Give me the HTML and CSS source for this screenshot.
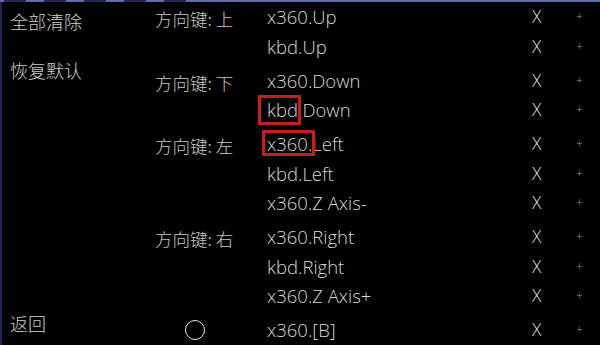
FILE: index.html
```html
<!DOCTYPE html>
<html lang="zh-CN">
<head>
  <meta charset="UTF-8" />
  <title>按键设置</title>
  <link rel="stylesheet" href="styles.css">
</head>
<body>
  <div class="top-bar">
    <span class="tab"></span><span class="tab"></span><span class="tab"></span><span class="tab"></span><span class="tab"></span>
  </div>
  <div class="main">
    <div class="side">
      <div class="side-btn">全部清除</div>
      <div class="side-btn">恢复默认</div>
      <div class="side-btn back">返回</div>
    </div>
    <div class="list">
      <div class="group">
        <div class="label">方向键: 上</div>
        <div class="rows">
          <div class="row"><span class="val">x360.Up</span><span class="del">X</span><span class="add">+</span></div>
          <div class="row"><span class="val">kbd.Up</span><span class="del">X</span><span class="add">+</span></div>
        </div>
      </div>
      <div class="group">
        <div class="label">方向键: 下</div>
        <div class="rows">
          <div class="row"><span class="val">x360.Down</span><span class="del">X</span><span class="add">+</span></div>
          <div class="row"><span class="val"><span class="mark mark-a">kbd</span>.Down</span><span class="del">X</span><span class="add">+</span></div>
        </div>
      </div>
      <div class="group">
        <div class="label">方向键: 左</div>
        <div class="rows">
          <div class="row"><span class="val"><span class="mark mark-b">x360.</span>Left</span><span class="del">X</span><span class="add">+</span></div>
          <div class="row"><span class="val">kbd.Left</span><span class="del">X</span><span class="add">+</span></div>
          <div class="row"><span class="val">x360.Z Axis-</span><span class="del">X</span><span class="add">+</span></div>
        </div>
      </div>
      <div class="group">
        <div class="label">方向键: 右</div>
        <div class="rows">
          <div class="row"><span class="val">x360.Right</span><span class="del">X</span><span class="add">+</span></div>
          <div class="row"><span class="val">kbd.Right</span><span class="del">X</span><span class="add">+</span></div>
          <div class="row"><span class="val">x360.Z Axis+</span><span class="del">X</span><span class="add">+</span></div>
        </div>
      </div>
      <div class="group">
        <div class="label"><span class="circle"></span></div>
        <div class="rows">
          <div class="row"><span class="val">x360.[B]</span><span class="del">X</span><span class="add">+</span></div>
        </div>
      </div>
    </div>
  </div>
  <div class="bottom-bar"></div>
</body>
</html>
```

FILE: styles.css
```css
* {
  box-sizing: border-box;
}

body {
  margin: 0;
  width: 600px;
  height: 345px;
  overflow: hidden;
  background-color: #000;
  color: #d8d8d8;
  font-family: "Open Sans", "Noto Sans CJK SC", sans-serif;
  font-weight: 300;
  display: flex;
  flex-direction: column;
}

.top-bar {
  height: 3px;
  background-color: #5d6cb4;
  display: flex;
  gap: 18px;
  padding-left: 4px;
}

.tab {
  width: 22px;
  height: 2px;
  background-color: #232a50;
}

.main {
  flex: 1;
  display: flex;
  border-left: 2px solid #1c2560;
}

.side {
  width: 153px;
  display: flex;
  flex-direction: column;
  padding-left: 8px;
  font-family: "Noto Sans CJK SC", sans-serif;
  font-size: 18px;
  color: #cfcfcf;
}

.side-btn {
  height: 49px;
  line-height: 38px;
}

.side-btn.back {
  margin-top: auto;
  height: 34px;
  line-height: 24px;
}

.list {
  flex: 1;
  display: flex;
  flex-direction: column;
  gap: 4.5px;
}

.group {
  display: flex;
}

.label {
  width: 112px;
  height: 29.5px;
  line-height: 33px;
  font-family: "Noto Sans CJK SC", sans-serif;
  font-size: 17.5px;
  color: #c8c8c8;
  white-space: pre;
}

.rows {
  flex: 1;
  display: flex;
  flex-direction: column;
}

.row {
  height: 29.5px;
  line-height: 29.5px;
  display: flex;
  font-size: 18.5px;
}

.val {
  flex: 1;
}

.del {
  width: 44px;
  font-size: 17.5px;
  color: #dcdcdc;
}

.add {
  width: 24px;
  font-size: 12px;
  color: #9a9a9a;
}

.mark {
  position: relative;
}

.mark::after {
  content: "";
  position: absolute;
  border: 3px solid #c41e1e;
}

.mark-a::after {
  left: -9px;
  right: -3px;
  top: -2px;
  bottom: -3px;
}

.mark-b::after {
  left: -5px;
  right: -3px;
  top: -1px;
  bottom: 0px;
}

.circle {
  display: inline-block;
  width: 20px;
  height: 20px;
  margin-left: 30px;
  margin-top: 5px;
  border: 1.5px solid #e8e8e8;
  border-radius: 50%;
}

.bottom-bar {
  height: 4px;
  background: linear-gradient(to right, #2b3a86, #4a5aa0 50%, #2b3a86);
}
```
